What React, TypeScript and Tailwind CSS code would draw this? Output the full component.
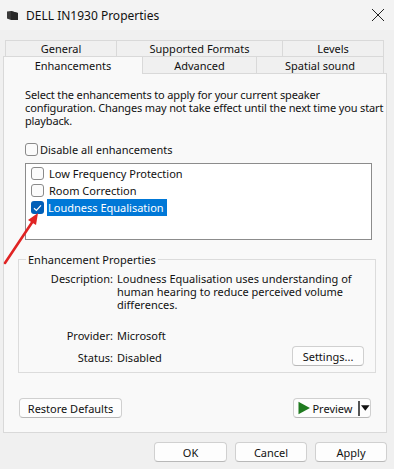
import React from "react";

function Check({ checked = false }: { checked?: boolean }) {
  if (checked) {
    return (
      <div className="w-[13px] h-[13px] rounded-[3px] bg-[#005fb8] flex items-center justify-center shrink-0">
        <svg width="9" height="8" viewBox="0 0 9 8">
          <path d="M1 4.2 L3.4 6.4 L8 1.4" fill="none" stroke="#fff" strokeWidth="1.2" />
        </svg>
      </div>
    );
  }
  return <div className="w-[13px] h-[13px] rounded-[3px] border border-[#8a8a8a] bg-[#fbfbfb] shrink-0" />;
}

function Btn({ children, className = "" }: { children: React.ReactNode; className?: string }) {
  return (
    <div
      className={
        "h-[20px] flex items-center justify-center rounded-[4px] border border-[#d0d0d0] border-b-[#b8b8b8] bg-[#fdfdfd] whitespace-nowrap " +
        className
      }
    >
      {children}
    </div>
  );
}

export default function App() {
  return (
    <div
      className="relative w-[394px] h-[469px] bg-[#f0f0f0] text-[11px] leading-[13px] text-[#111] flex flex-col overflow-hidden"
      style={{ fontFamily: '"Noto Sans", "Segoe UI", sans-serif' }}
    >
      {/* Title bar */}
      <div className="h-[30px] flex items-center pl-[7px] pr-[8px] bg-[#f3f3f3]">
        <svg width="11" height="9" viewBox="0 0 11 9">
          <path d="M0 0.5 L4 0 L11 2 L11 9 L4 9 L0 7.5 Z" fill="#3a3a3a" />
          <path d="M4 0 L11 2 L11 9 L4 9 Z" fill="#2a2a2a" />
        </svg>
        <span className="ml-[8px] text-[12px]">DELL IN1930 Properties</span>
        <div className="flex-1" />
        <svg width="14" height="14" viewBox="0 0 14 14" className="mr-[1px]">
          <path d="M1 1 L13 13 M13 1 L1 13" stroke="#222" strokeWidth="1" />
        </svg>
      </div>

      {/* Tabs */}
      <div className="mt-[10px] flex ml-[5px] h-[16px]">
        <div className="w-[111px] border-t border-l border-[#d9d9d9] bg-[#f0f0f0] flex items-center justify-center">General</div>
        <div className="w-[166px] border-t border-l border-[#d9d9d9] bg-[#f0f0f0] flex items-center justify-center">Supported Formats</div>
        <div className="w-[102px] border-t border-l border-r border-[#d9d9d9] bg-[#f0f0f0] flex items-center justify-center">Levels</div>
      </div>
      <div className="flex ml-[3px] h-[18px]">
        <div className="w-[140px] border-t border-l border-r border-[#d9d9d9] bg-[#f9f9f9] flex items-center justify-center">Enhancements</div>
        <div className="w-[113px] border-t border-b border-[#d9d9d9] bg-[#f0f0f0] flex items-center justify-center">Advanced</div>
        <div className="w-[128px] border-t border-l border-r border-b border-[#d9d9d9] bg-[#f0f0f0] flex items-center justify-center">Spatial sound</div>
        <div className="w-[3px] border-b border-[#d9d9d9]" />
      </div>

      {/* Panel */}
      <div className="ml-[3px] w-[384px] h-[359px] border-l border-r border-b border-[#d9d9d9] bg-[#f9f9f9] pl-[14px] flex flex-col">
        <p className="ml-[7px] mt-[14px] whitespace-nowrap tracking-[-0.15px]">
          Select the enhancements to apply for your current speaker
          <br />
          configuration. Changes may not take effect until the next time you start
          <br />
          playback.
        </p>
        <div className="ml-[7px] mt-[16px] flex items-center h-[13px]">
          <Check />
          <span className="ml-[2px]">Disable all enhancements</span>
        </div>
        <div className="ml-[7px] mt-[7px] w-[347px] h-[77px] border border-[#8c8c8c] bg-white pt-[1px] pl-[5px]">
          <div className="h-[17px] flex items-center">
            <Check />
            <span className="ml-[4px] px-[1px]">Low Frequency Protection</span>
          </div>
          <div className="h-[17px] flex items-center">
            <Check />
            <span className="ml-[4px] px-[1px]">Room Correction</span>
          </div>
          <div className="h-[17px] flex items-center">
            <Check checked />
            <span className="ml-[3px] pl-[1px] pr-[3px] h-[17px] flex items-center bg-[#0078d7] text-white">Loudness Equalisation</span>
          </div>
        </div>

        <fieldset className="mt-[13px] w-[358px] border border-[#dcdcdc] px-0 pb-[6px]">
          <legend className="ml-[7px] px-[2px] leading-[13px]">Enhancement Properties</legend>
          <div className="flex mt-[6px]">
            <div className="w-[94px] text-right">Description:</div>
            <div className="ml-[4px] whitespace-nowrap">
              Loudness Equalisation uses understanding of
              <br />
              human hearing to reduce perceived volume
              <br />
              differences.
            </div>
          </div>
          <div className="flex mt-[18px]">
            <div className="w-[94px] text-right">Provider:</div>
            <div className="ml-[4px]">Microsoft</div>
          </div>
          <div className="flex items-center mt-[4px]">
            <div className="w-[94px] text-right pt-[3px]">Status:</div>
            <div className="ml-[4px] pt-[3px]">Disabled</div>
            <div className="flex-1" />
            <Btn className="w-[72px] mr-[11px]">Settings...</Btn>
          </div>
        </fieldset>

        <div className="mt-[25px] flex items-center">
          <Btn className="ml-[1px] w-[103px]">Restore Defaults</Btn>
          <div className="flex-1" />
          <div className="mr-[15px] w-[78px] h-[20px] flex items-center rounded-[4px] border border-[#d0d0d0] border-b-[#b8b8b8] bg-[#fdfdfd]">
            <svg width="13" height="14" viewBox="0 0 13 14" className="ml-[4px]">
              <path d="M0.5 0.5 L12.5 7 L0.5 13.5 Z" fill="#1f7a1f" />
            </svg>
            <span className="ml-[2px]">Preview</span>
            <div className="ml-[6px] w-[2px] h-[15px] bg-[#555]" />
            <svg width="9" height="6" viewBox="0 0 9 6" className="ml-[1px]">
              <path d="M0 0 L9 0 L4.5 6 Z" fill="#111" />
            </svg>
          </div>
        </div>
      </div>

      {/* Bottom buttons */}
      <div className="mt-[9px] flex justify-end pr-[7px] gap-[8px]">
        <Btn className="w-[73px] border-[#3d6f99] border-b-[#3d6f99]">OK</Btn>
        <Btn className="w-[72px]">Cancel</Btn>
        <Btn className="w-[72px]">Apply</Btn>
      </div>

      {/* Red annotation arrow */}
      <svg className="absolute left-0 top-0 pointer-events-none" width="394" height="469" viewBox="0 0 394 469">
        <path d="M5 263 L33 221" stroke="#e02424" strokeWidth="2.6" strokeLinecap="round" />
        <path d="M38 213 L28 220 L36 225 Z" fill="#e02424" />
      </svg>
    </div>
  );
}
